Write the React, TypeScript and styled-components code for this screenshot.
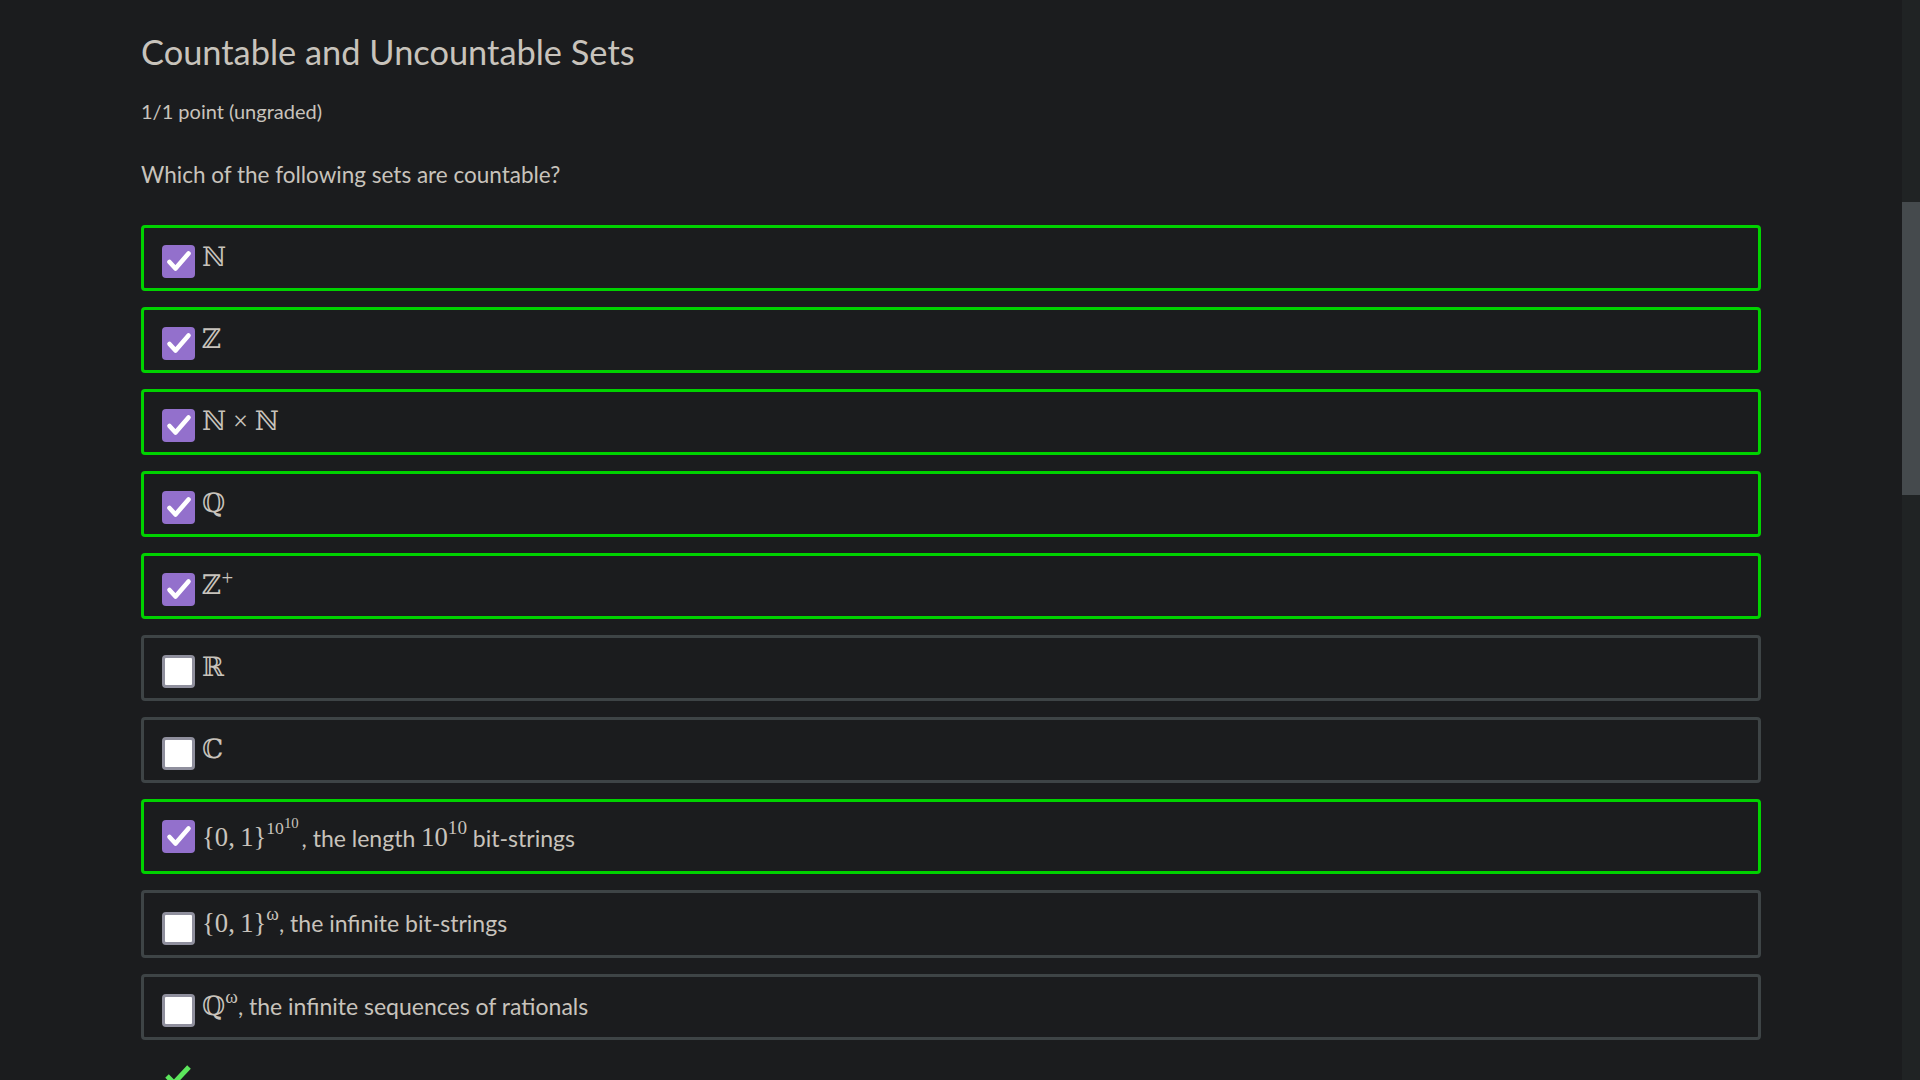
import React from "react";
import styled, { createGlobalStyle } from "styled-components";

const GlobalStyle = createGlobalStyle`
  html, body {
    margin: 0;
    padding: 0;
    background: #1b1c1e;
    overflow: hidden;
  }
  body {
    font-family: Lato, "Liberation Sans", sans-serif;
    color: #c8c3bc;
  }
`;

const Page = styled.div`
  display: flex;
  height: 100vh;
  overflow: hidden;
  background: #1b1c1e;
`;

const Main = styled.main`
  flex: 1;
  min-width: 0;
  box-sizing: border-box;
  padding: 31px 141px 0 141px;
`;

const Title = styled.h2`
  margin: 0;
  font-weight: 400;
  font-size: 34.4px;
  line-height: 1.2;
  color: #c8c3bc;
`;

const Points = styled.div`
  margin-top: 27px;
  font-size: 20px;
  line-height: 1.2;
  color: #c8c3bc;
`;

const Prompt = styled.p`
  margin: 38px 0 0;
  font-size: 22.5px;
  line-height: 1.2;
  color: #c8c3bc;
`;

const Choices = styled.div`
  margin-top: 37px;
  display: flex;
  flex-direction: column;
  gap: 16px;
`;

const Choice = styled.label<{ $correct: boolean; $height: number; $top: number }>`
  display: flex;
  align-items: center;
  gap: 7px;
  box-sizing: border-box;
  height: ${(p) => p.$height}px;
  padding: ${(p) => p.$top}px 18px 0;
  border: 3px solid ${(p) => (p.$correct ? "#00d200" : "#3e4446")};
  border-radius: 4px;
`;

const Box = styled.span<{ $checked: boolean }>`
  flex: 0 0 auto;
  width: 33px;
  height: 33px;
  box-sizing: border-box;
  border-radius: 4px;
  display: flex;
  align-items: center;
  justify-content: center;
  background: ${(p) => (p.$checked ? "#9370cc" : "#ffffff")};
  border: ${(p) => (p.$checked ? "none" : "3px solid #8f8f9d")};
`;

const Content = styled.span<{ $shift?: number }>`
  display: block;
  font-size: 23px;
  line-height: 1;
  white-space: nowrap;
  color: #c8c3bc;
  margin-bottom: ${(p) => p.$shift ?? 9}px;
`;

const M = styled.span`
  font-family: "Liberation Serif", "DejaVu Serif", serif;
  font-size: 1.16em;
`;

const Sup = styled.sup<{ $size?: number; $raise?: number }>`
  font-size: ${(p) => p.$size ?? 0.7}em;
  line-height: 0;
  vertical-align: ${(p) => p.$raise ?? 0.55}em;
`;

const Feedback = styled.div`
  margin-top: 24px;
  padding-left: 24px;
  display: flex;
`;

const Track = styled.div`
  flex: 0 0 18px;
  box-sizing: border-box;
  padding-top: 202px;
  background: #202324;
`;

const Thumb = styled.div`
  height: 293px;
  background: #454a4d;
`;

const Check = () => (
  <svg width="33" height="33" viewBox="0 0 33 33">
    <polyline
      points="7.5,17 13.5,23.5 26.5,8.5"
      fill="none"
      stroke="#ffffff"
      strokeWidth="4.6"
      strokeLinecap="round"
      strokeLinejoin="round"
    />
  </svg>
);

type Opt = {
  checked: boolean;
  height?: number;
  top?: number;
  shift?: number;
  body: React.ReactNode;
};

const options: Opt[] = [
  { checked: true, body: <M>ℕ</M> },
  { checked: true, body: <M>ℤ</M> },
  { checked: true, body: <M>ℕ × ℕ</M> },
  { checked: true, body: <M>ℚ</M> },
  {
    checked: true,
    body: (
      <M>
        ℤ<Sup $size={0.78} $raise={0.45}>+</Sup>
      </M>
    ),
  },
  { checked: false, body: <M>ℝ</M> },
  { checked: false, body: <M>ℂ</M> },
  {
    checked: true,
    height: 75,
    top: 0,
    shift: 0,
    body: (
      <>
        <M>
          {"{0,\u20091}"}
          <Sup $size={0.66} $raise={0.72}>
            10<Sup $size={0.84} $raise={0.4}>10</Sup>
          </Sup>
        </M>
        {"\u2009"}, the length{" "}
        <M>
          10<Sup $size={0.72} $raise={0.6}>10</Sup>
        </M>{" "}
        bit-strings
      </>
    ),
  },
  {
    checked: false,
    height: 68,
    top: 8,
    body: (
      <>
        <M>
          {"{0,\u20091}"}
          <Sup $size={0.72} $raise={0.6}>ω</Sup>
        </M>
        , the infinite bit-strings
      </>
    ),
  },
  {
    checked: false,
    body: (
      <>
        <M>
          ℚ<Sup $size={0.72} $raise={0.6}>ω</Sup>
        </M>
        , the infinite sequences of rationals
      </>
    ),
  },
];

export default function App() {
  return (
    <Page>
      <GlobalStyle />
      <Main>
        <Title>Countable and Uncountable Sets</Title>
        <Points>1/1 point (ungraded)</Points>
        <Prompt>Which of the following sets are countable?</Prompt>
        <Choices>
          {options.map((o, i) => (
            <Choice
              key={i}
              $correct={o.checked}
              $height={o.height ?? 66}
              $top={o.top ?? 7}
            >
              <Box $checked={o.checked}>{o.checked && <Check />}</Box>
              <Content $shift={o.shift}>{o.body}</Content>
            </Choice>
          ))}
        </Choices>
        <Feedback>
          <svg width="26" height="22" viewBox="0 0 26 22">
            <path d="M2 12 L9 19 L24 3" fill="none" stroke="#5ce65c" strokeWidth="5" strokeLinejoin="miter" />
          </svg>
        </Feedback>
      </Main>
      <Track>
        <Thumb />
      </Track>
    </Page>
  );
}
